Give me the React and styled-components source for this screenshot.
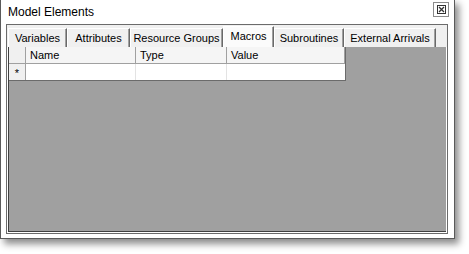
import styled, { createGlobalStyle } from "styled-components"

const Global = createGlobalStyle`
    body {
        margin: 0;
        background: #ffffff;
        font-family: "Liberation Sans", Arial, sans-serif;
        overflow: hidden;
    }
`

const Page = styled.div`
    width: 469px;
    height: 254px;
    background: #ffffff;
`

const Window = styled.div`
    box-sizing: border-box;
    width: 455px;
    height: 240px;
    margin-top: -1px;
    background: #ffffff;
    border: 1px solid #5a5a5a;
    box-shadow: 4px 5px 7px rgba(0, 0, 0, 0.45);
    display: flex;
    flex-direction: column;
`

const TitleBar = styled.div`
    height: 24px;
    display: flex;
    align-items: center;
    justify-content: space-between;
    padding: 0 5px 0 7px;
    flex-shrink: 0;
`

const Title = styled.span`
    font-size: 12px;
    color: #000;
    margin-top: -1px;
`

const CloseButton = styled.div`
    box-sizing: border-box;
    width: 16px;
    height: 15px;
    margin-top: -5px;
    border: 1px solid #8c8c8c;
    background: #fff;
    display: flex;
    align-items: center;
    justify-content: center;
`

const Body = styled.div`
    flex: 1;
    padding: 0 6px 4px 5px;
    display: flex;
`

const Frame = styled.div`
    flex: 1;
    border: 1px solid #6b6b6b;
    background: #ffffff;
    display: flex;
    flex-direction: column;
`

const TabStrip = styled.div`
    height: 22px;
    flex-shrink: 0;
    background: #f0f0f0;
    display: flex;
    align-items: flex-end;
    padding-left: 1px;
`

const Tab = styled.div`
    box-sizing: border-box;
    width: ${p => p.$w}px;
    height: ${p => (p.$active ? 21 : 19)}px;
    background: ${p => (p.$active ? "#fbfbfb" : "#f0f0f0")};
    border-top: 1px solid #ffffff;
    border-left: 1px solid #ffffff;
    border-right: 1px solid #696969;
    box-shadow: inset -1px 0 0 #a0a0a0;
    font-size: 11px;
    color: #000;
    display: flex;
    align-items: center;
    justify-content: center;
    padding-bottom: ${p => (p.$active ? 2 : 0)}px;
    white-space: nowrap;
`

const Workspace = styled.div`
    flex: 1;
    margin: 0 1px 1px 1px;
    background: #a0a0a0;
    border-left: 1px solid #404040;
    border-bottom: 1px solid #404040;
`

const Grid = styled.div`
    display: grid;
    grid-template-columns: 17px 110px 91px 118px;
    grid-template-rows: 17px 16px;
    width: 337px;
    background: #ffffff;
    border-right: 1px solid #6b6b6b;
    border-bottom: 1px solid #6b6b6b;
    box-sizing: border-box;
`

const HeaderCell = styled.div`
    background: ${p => (p.$corner ? "#f0f0f0" : "#f5f5f5")};
    border-right: 1px solid #a0a0a0;
    border-bottom: 1px solid #a0a0a0;
    font-size: 11px;
    padding-left: 4px;
    display: flex;
    align-items: center;
`

const RowHeader = styled.div`
    background: #f0f0f0;
    border-right: 1px solid #a0a0a0;
    font-size: 11px;
    display: flex;
    align-items: center;
    justify-content: center;
    padding-top: 2px;
`

const Cell = styled.div`
    background: #ffffff;
    border-right: ${p => (p.$last ? "none" : "1px solid #e3e3e3")};
`

const tabs = [
    { label: "Variables", w: 59 },
    { label: "Attributes", w: 63 },
    { label: "Resource Groups", w: 93 },
    { label: "Macros", w: 51, active: true },
    { label: "Subroutines", w: 70 },
    { label: "External Arrivals", w: 92 },
]

const CloseIcon = () => (
    <svg width="9" height="9" viewBox="0 0 9 9">
        <rect x="0.5" y="0.5" width="8" height="8" fill="none" stroke="#333" />
        <path d="M2 2 L7 7 M7 2 L2 7" stroke="#333" strokeWidth="1.3" />
    </svg>
)

const App = () => {
    return (
        <Page>
            <Global />
            <Window>
                <TitleBar>
                    <Title>Model Elements</Title>
                    <CloseButton>
                        <CloseIcon />
                    </CloseButton>
                </TitleBar>
                <Body>
                    <Frame>
                        <TabStrip>
                            {tabs.map(t => (
                                <Tab key={t.label} $w={t.w} $active={t.active}>
                                    {t.label}
                                </Tab>
                            ))}
                        </TabStrip>
                        <Workspace>
                            <Grid>
                                <HeaderCell $corner />
                                <HeaderCell>Name</HeaderCell>
                                <HeaderCell>Type</HeaderCell>
                                <HeaderCell>Value</HeaderCell>
                                <RowHeader>*</RowHeader>
                                <Cell />
                                <Cell />
                                <Cell $last />
                            </Grid>
                        </Workspace>
                    </Frame>
                </Body>
            </Window>
        </Page>
    )
}

export default App
